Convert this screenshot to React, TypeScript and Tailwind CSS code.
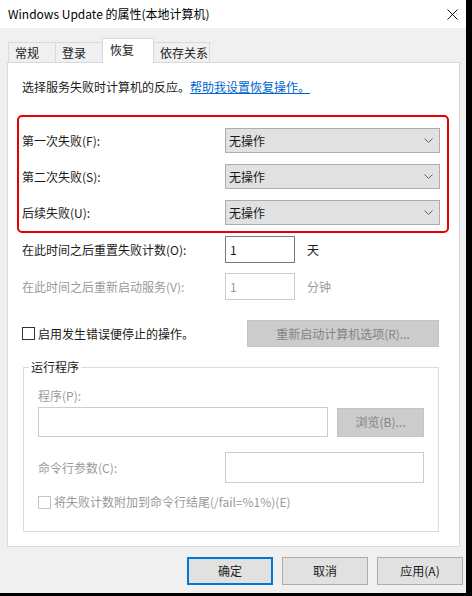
import React from "react";

const tabs = [
  { label: "常规", w: "w-[48px] border-l" },
  { label: "登录", w: "w-[47px]" },
  { label: "恢复", w: "w-[52px]", active: true },
  { label: "依存关系", w: "w-[56px]" },
];

const failures = ["第一次失败(F):", "第二次失败(S):", "后续失败(U):"];

function Chevron() {
  return (
    <svg width="9" height="5" viewBox="0 0 9 5" className="mr-[6px]">
      <path d="M0.5 0.5 L4.5 4.5 L8.5 0.5" fill="none" stroke="#606060" strokeWidth="1" />
    </svg>
  );
}

function Select() {
  return (
    <div className="w-[215px] h-[25px] bg-[#e1e1e1] border border-[#adadad] flex items-center justify-between pl-[3px]">
      <span>无操作</span>
      <Chevron />
    </div>
  );
}

export default function App() {
  return (
    <div className="w-[472px] h-[596px] bg-black text-[12px] leading-[16px] text-[#1a1a1a] font-['Noto_Sans_CJK_SC',sans-serif]">
      <div className="w-[466px] h-[593px] bg-[#f0f0f0] flex flex-col">
        {/* title bar */}
        <div className="h-[28px] bg-white flex items-center justify-between px-[8px]">
          <span className="text-black">Windows Update 的属性(本地计算机)</span>
          <svg width="11" height="11" viewBox="0 0 11 11">
            <path d="M0.5 0.5 L10.5 10.5 M10.5 0.5 L0.5 10.5" stroke="#111" strokeWidth="1" />
          </svg>
        </div>

        <div className="pl-[7px] pt-[10px]">
          {/* tabs */}
          <div className="relative z-10 flex h-[25px] -mb-[1px] pl-[1px]">
            {tabs.map((t) =>
              t.active ? (
                <div
                  key={t.label}
                  className={`${t.w} -ml-[1px] h-[25px] bg-white border-l border-t border-r border-[#d9d9d9] pl-[7px] pt-[3px]`}
                >
                  {t.label}
                </div>
              ) : (
                <div
                  key={t.label}
                  className={`${t.w} mt-[4px] h-[20px] bg-[#f0f0f0] border-t border-r border-[#d9d9d9] pl-[6px] pt-[2px]`}
                >
                  {t.label}
                </div>
              )
            )}
          </div>

          {/* panel */}
          <div className="w-[453px] h-[485px] bg-white border border-[#d9d9d9]">
            <div className="mt-[16px] pl-[14px] h-[16px]">
              选择服务失败时计算机的反应。
              <span className="text-[#0066cc] underline">帮助我设置恢复操作。</span>
            </div>

            <div className="mt-[20px] ml-[9px] w-[432px] h-[118px] border-2 border-[#e60000] rounded-[5px] pt-[11px] flex flex-col gap-[11px]">
              {failures.map((f) => (
                <div key={f} className="flex items-center h-[25px]">
                  <span className="w-[206px] pl-[3px]">{f}</span>
                  <Select />
                </div>
              ))}
            </div>

            <div className="mt-[3px] h-[27px] flex items-center">
              <span className="w-[217px] pl-[14px]">在此时间之后重置失败计数(O):</span>
              <div className="w-[70px] h-[27px] border border-[#7a7a7a] pl-[4px] flex items-center">1</div>
              <span className="ml-[12px]">天</span>
            </div>

            <div className="mt-[10px] h-[27px] flex items-center text-[#9a9a9a]">
              <span className="w-[217px] pl-[14px]">在此时间之后重新启动服务(V):</span>
              <div className="w-[70px] h-[27px] border border-[#cccccc] pl-[4px] flex items-center">1</div>
              <span className="ml-[12px]">分钟</span>
            </div>

            <div className="mt-[20px] h-[27px] flex items-center">
              <div className="w-[239px] pl-[14px] flex items-center">
                <span className="w-[13px] h-[13px] border border-[#333] bg-white" />
                <span className="ml-[3px]">启用发生错误便停止的操作。</span>
              </div>
              <div className="w-[192px] h-[27px] bg-[#cccccc] border border-[#c4c4c4] text-[#838383] flex items-center justify-center">
                重新启动计算机选项(R)...
              </div>
            </div>

            <fieldset className="mt-[13px] ml-[15px] w-[416px] h-[172px] border border-[#dcdcdc] pl-[14px]">
              <legend className="-ml-[9px] px-[2px] leading-[14px] text-[#1a1a1a]">运行程序</legend>
              <div className="mt-[14px] text-[#9a9a9a]">程序(P):</div>
              <div className="mt-[3px] h-[30px] flex items-center">
                <div className="w-[290px] h-[30px] border border-[#cccccc]" />
                <div className="ml-[9px] w-[87px] h-[29px] bg-[#cccccc] border border-[#c4c4c4] text-[#838383] flex items-center justify-center">
                  浏览(B)...
                </div>
              </div>
              <div className="mt-[15px] h-[31px] flex items-center">
                <span className="w-[187px] text-[#9a9a9a]">命令行参数(C):</span>
                <div className="w-[199px] h-[31px] border border-[#cccccc]" />
              </div>
              <div className="mt-[12px] h-[14px] flex items-center text-[#9a9a9a]">
                <span className="w-[13px] h-[13px] border border-[#c4c4c4]" />
                <span className="ml-[3px]">将失败计数附加到命令行结尾(/fail=%1%)(E)</span>
              </div>
            </fieldset>
          </div>

          {/* dialog buttons */}
          <div className="mt-[10px] flex justify-end gap-[9px] pr-[3px]">
            <div className="w-[86px] h-[28px] bg-[#e1e1e1] border-2 border-[#0078d7] flex items-center justify-center">
              确定
            </div>
            <div className="w-[86px] h-[28px] bg-[#e1e1e1] border border-[#adadad] flex items-center justify-center">
              取消
            </div>
            <div className="w-[86px] h-[28px] bg-[#e1e1e1] border border-[#adadad] flex items-center justify-center">
              应用(A)
            </div>
          </div>
        </div>
      </div>
    </div>
  );
}
